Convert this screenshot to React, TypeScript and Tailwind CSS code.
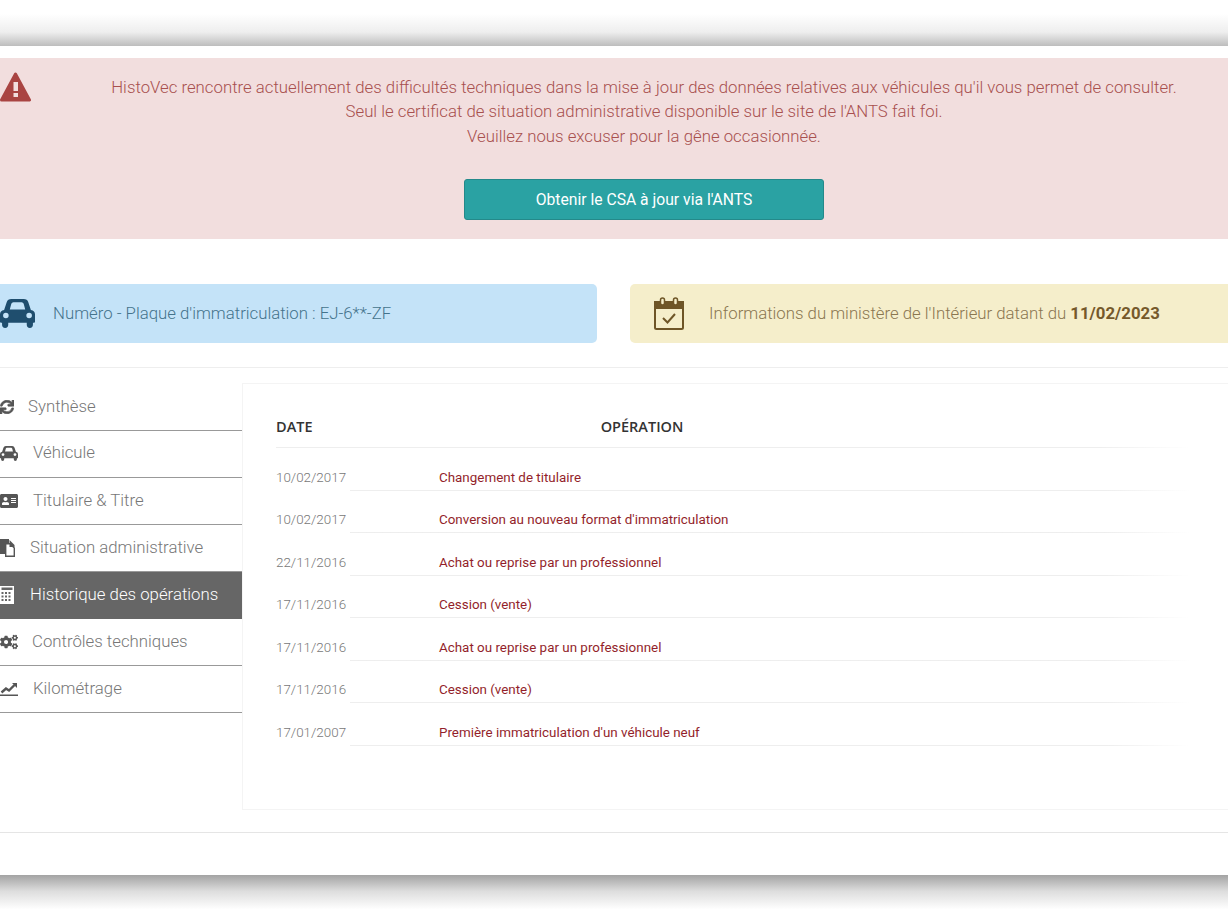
import { FaSync, FaAddressCard, FaCogs } from "react-icons/fa";

function WarningIcon() {
  return (
    <svg viewBox="0 0 31 30" className="w-[31px] h-[30px]">
      <path
        fillRule="evenodd"
        fill="#a94442"
        stroke="#a94442"
        strokeWidth="3"
        strokeLinejoin="round"
        d="M15.5 2 L29.5 28 H1.5 Z"
      />
      <rect x="13.5" y="10" width="4.5" height="9" fill="#f2dede" />
      <rect x="13.5" y="21" width="4.5" height="4" fill="#f2dede" />
    </svg>
  );
}

function CarIcon({ className }: { className: string }) {
  return (
    <svg viewBox="0 0 34 28" fill="currentColor" className={className}>
      <path
        fillRule="evenodd"
        d="M0 15 Q0 11 4 10.5 L6.5 3 Q7.5 0 11 0 H23 Q26.5 0 27.5 3 L30 10.5 Q34 11 34 15 V22 Q34 23 33 23 H32 V25 a3 3 0 0 1 -6 0 V23 H8 V25 a3 3 0 0 1 -6 0 V23 H1 Q0 23 0 22 Z M9.5 10 H24.5 L23 4.5 Q22.5 3 21 3 H13 Q11.5 3 11 4.5 Z M3 16 a2.7 2.7 0 1 0 5.4 0 a2.7 2.7 0 1 0 -5.4 0 Z M25.6 16 a2.7 2.7 0 1 0 5.4 0 a2.7 2.7 0 1 0 -5.4 0 Z"
      />
    </svg>
  );
}

function CalendarIcon() {
  return (
    <svg viewBox="0 0 30 33" className="w-[30px] h-[33px] text-[#6e5527]">
      <rect x="1" y="5" width="28" height="27" rx="1.5" fill="none" stroke="currentColor" strokeWidth="2" />
      <rect x="0" y="4" width="30" height="8" fill="currentColor" />
      <rect x="6.5" y="1" width="4" height="7" rx="2" fill="#f5eecb" stroke="currentColor" strokeWidth="1.5" />
      <rect x="19.5" y="1" width="4" height="7" rx="2" fill="#f5eecb" stroke="currentColor" strokeWidth="1.5" />
      <path d="M9 21 L13.5 25.5 L21 17" fill="none" stroke="currentColor" strokeWidth="2" />
    </svg>
  );
}

function FilesIcon() {
  return (
    <svg viewBox="0 0 15 18" className="w-[15px] h-[18px]" fill="currentColor">
      <path d="M0 0 H9 V4 H5 V15 H0 Z" />
      <path d="M5.7 4.7 H10 L14.3 9 V17.3 H5.7 Z" fill="none" stroke="currentColor" strokeWidth="1.4" />
      <path d="M9.5 1 L14.5 6 V8 H9.5 Z" />
    </svg>
  );
}

function CalculatorIcon() {
  return (
    <svg viewBox="0 0 14 18" className="w-[14px] h-[18px]" fill="currentColor">
      <path
        fillRule="evenodd"
        d="M0 0 H14 V18 H0 Z M1.5 1.5 V4 H12.5 V1.5 Z M1.5 6 V8 H3.5 V6 Z M5 6 V8 H7 V6 Z M8.5 6 V8 H10.5 V6 Z M1.5 9.5 V11.5 H3.5 V9.5 Z M5 9.5 V11.5 H7 V9.5 Z M8.5 9.5 V11.5 H10.5 V9.5 Z M1.5 13 V15 H3.5 V13 Z M5 13 V15 H7 V13 Z M8.5 13 V15 H10.5 V13 Z"
      />
    </svg>
  );
}

function ChartIcon() {
  return (
    <svg viewBox="0 0 18 14" className="w-[18px] h-[14px]" fill="currentColor">
      <rect x="0" y="12.5" width="18" height="1.5" />
      <path d="M1.5 10.5 L6 6.5 L9 8.5 L14.5 3" fill="none" stroke="currentColor" strokeWidth="2.4" />
      <path d="M12 1 H17 V6 Z" />
    </svg>
  );
}

const menu = [
  { label: "Synthèse", icon: <FaSync className="text-[14px]" stroke="currentColor" strokeWidth="25" />, width: "w-[28px]" },
  { label: "Véhicule", icon: <CarIcon className="w-[18px] h-[15px]" />, width: "w-[33px]", lift: true },
  { label: "Titulaire & Titre", icon: <FaAddressCard className="text-[18px]" />, width: "w-[33px]" },
  { label: "Situation administrative", icon: <FilesIcon />, width: "w-[30px]" },
  { label: "Historique des opérations", icon: <CalculatorIcon />, width: "w-[30px]", active: true, lift: true },
  { label: "Contrôles techniques", icon: <FaCogs className="text-[18px]" />, width: "w-[32px]" },
  { label: "Kilométrage", icon: <ChartIcon />, width: "w-[33px]" },
];

const rows = [
  ["10/02/2017", "Changement de titulaire"],
  ["10/02/2017", "Conversion au nouveau format d'immatriculation"],
  ["22/11/2016", "Achat ou reprise par un professionnel"],
  ["17/11/2016", "Cession (vente)"],
  ["17/11/2016", "Achat ou reprise par un professionnel"],
  ["17/11/2016", "Cession (vente)"],
  ["17/01/2007", "Première immatriculation d'un véhicule neuf"],
];

export default function App() {
  return (
    <div className="w-[1228px] h-[921px] overflow-hidden bg-white font-['Roboto',sans-serif] flex flex-col">
      <div className="h-[46px] shrink-0 bg-gradient-to-b from-white from-30% via-[#eeeeee] via-70% to-[#bdbdbd]" />

      <div className="h-[829px] shrink-0 flex flex-col pt-3">
        <div className="h-[181px] shrink-0 bg-[#f2dede] relative pt-[16.5px] text-center text-[16.8px] leading-[24.5px] font-light text-[#a8504e]">
          <div className="absolute left-0 top-[14px]">
            <WarningIcon />
          </div>
          <div className="pl-[60px]">
            <p>HistoVec rencontre actuellement des difficultés techniques dans la mise à jour des données relatives aux véhicules qu'il vous permet de consulter.</p>
            <p>Seul le certificat de situation administrative disponible sur le site de l'ANTS fait foi.</p>
            <p>Veuillez nous excuser pour la gêne occasionnée.</p>
            <button className="mt-[31px] w-[360px] h-[41px] pt-px rounded-[3px] bg-[#2aa2a3] border border-[#24898a] text-white text-[15.7px] font-normal">
              Obtenir le CSA à jour via l'ANTS
            </button>
          </div>
        </div>

        <div className="mt-[45px] h-[59px] shrink-0 flex gap-[33px]">
          <div className="w-[597px] bg-[#c4e3f8] rounded-r-[5px] flex items-center text-[#44738c]">
            <CarIcon className="w-[35px] h-[29px] shrink-0 text-[#1f4e6e]" />
            <span className="ml-[18px] text-[16.8px] font-light">Numéro - Plaque d'immatriculation : EJ-6**-ZF</span>
          </div>
          <div className="flex-1 bg-[#f5eecb] rounded-l-[5px] flex items-center pl-[24px] text-[#8a7650]">
            <CalendarIcon />
            <span className="ml-[25px] text-[16.8px] font-light">
              Informations du ministère de l'Intérieur datant du <b className="font-bold text-[#75592b]">11/02/2023</b>
            </span>
          </div>
        </div>

        <div className="mt-6 border-t border-[#eeeeee] pt-[15px] flex h-[465px] shrink-0">
          <nav className="w-[242px] shrink-0 pt-px">
            {menu.map(({ label, icon, width, active, lift }) => (
              <div
                key={label}
                className={`h-[47px] flex items-center text-[16.8px] font-light ${lift ? "pb-[2px]" : ""} ${
                  active ? "bg-[#666666] text-white" : "border-b border-[#999999] text-[#777777]"
                }`}
              >
                <span className={`${width} shrink-0 flex ${active ? "text-white" : "text-[#555555]"}`}>{icon}</span>
                <span>{label}</span>
              </div>
            ))}
          </nav>

          <section className="flex-1 h-[427px] border-t border-l border-b border-[#f4f4f4] pt-[22px] pl-[33px]">
            <div className="relative flex items-center h-[42px] pb-px w-[914px] text-[14.5px] font-semibold font-['Open_Sans',sans-serif] text-[#333333]">
              <span className="w-[162px]">DATE</span>
              <span className="w-[408px] text-center">OPÉRATION</span>
              <div className="absolute left-0 right-0 bottom-0 h-px bg-gradient-to-r from-[#eeeeee] via-[#eeeeee] via-90% to-transparent" />
            </div>
            {rows.map(([date, op], i) => (
              <div key={i} className="flex flex-col h-[42.5px] w-[914px]">
                <div className="flex-1 flex items-center pt-[18.5px] text-[13.4px]">
                  <span className="w-[163px] shrink-0 text-[#777777] font-light">{date}</span>
                  <span className="text-[#931f2b]">{op}</span>
                </div>
                <div className="h-px ml-[74px] bg-gradient-to-r from-[#eeeeee] via-[#eeeeee] via-90% to-transparent" />
              </div>
            ))}
          </section>
        </div>

        <div className="border-t border-[#e5e5e5] flex-1" />
      </div>

      <div className="flex-1 bg-gradient-to-b from-[#a3a3a3] via-[#dddddd] via-[35%] to-white to-[75%]" />
    </div>
  );
}
